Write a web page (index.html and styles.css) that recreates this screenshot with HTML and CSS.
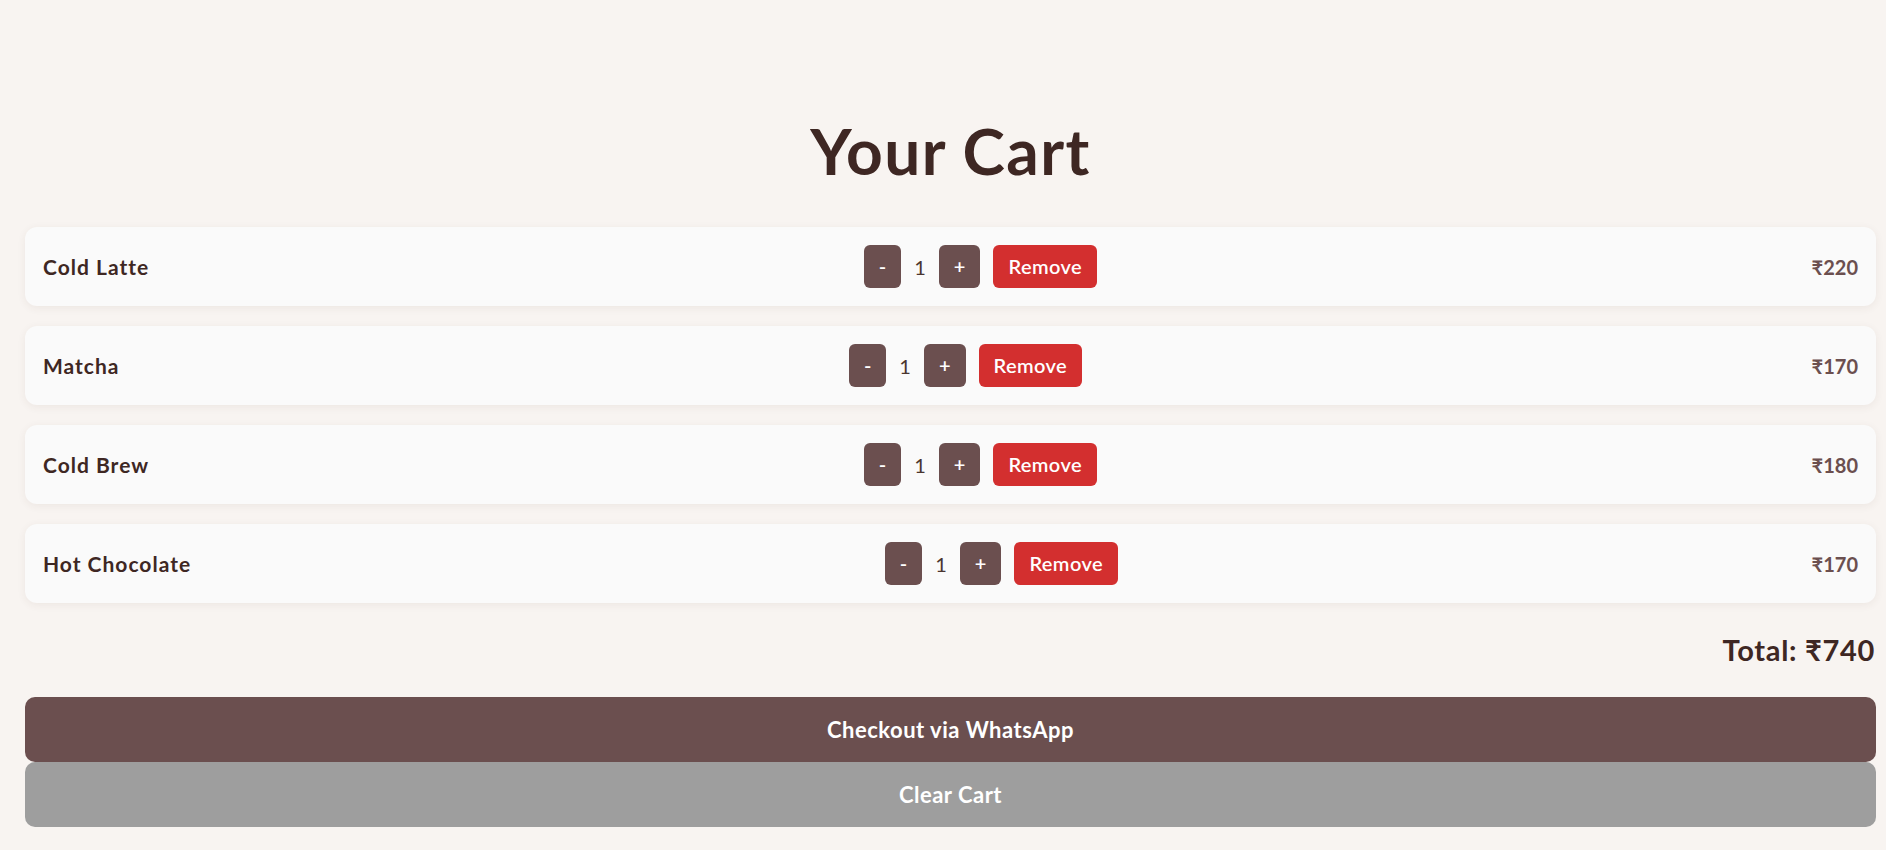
FILE: index.html
```html
<!DOCTYPE html>
<html lang="en">
<head>
<meta charset="utf-8">
<title>Your Cart</title>
<link rel="stylesheet" href="styles.css">
</head>
<body>
<main class="page">
  <h1 class="title">Your Cart</h1>
  <section class="cart-list">
    <div class="cart-item">
      <span class="item-name">Cold Latte</span>
      <div class="controls">
        <button class="qty-btn">-</button>
        <span class="qty">1</span>
        <button class="qty-btn">+</button>
        <button class="remove-btn">Remove</button>
      </div>
      <span class="item-price">₹220</span>
    </div>
    <div class="cart-item">
      <span class="item-name">Matcha</span>
      <div class="controls">
        <button class="qty-btn">-</button>
        <span class="qty">1</span>
        <button class="qty-btn">+</button>
        <button class="remove-btn">Remove</button>
      </div>
      <span class="item-price">₹170</span>
    </div>
    <div class="cart-item">
      <span class="item-name">Cold Brew</span>
      <div class="controls">
        <button class="qty-btn">-</button>
        <span class="qty">1</span>
        <button class="qty-btn">+</button>
        <button class="remove-btn">Remove</button>
      </div>
      <span class="item-price">₹180</span>
    </div>
    <div class="cart-item">
      <span class="item-name">Hot Chocolate</span>
      <div class="controls">
        <button class="qty-btn">-</button>
        <span class="qty">1</span>
        <button class="qty-btn">+</button>
        <button class="remove-btn">Remove</button>
      </div>
      <span class="item-price">₹170</span>
    </div>
  </section>
  <div class="total">Total: ₹740</div>
  <div class="actions">
    <button class="action-btn checkout">Checkout via WhatsApp</button>
    <button class="action-btn clear">Clear Cart</button>
  </div>
</main>
</body>
</html>
```

FILE: styles.css
```css
html, body {
  margin: 0;
  padding: 0;
  background: #f8f4f1;
}

body {
  font-family: Lato, "Noto Sans", "DejaVu Sans", sans-serif;
  color: #3e2723;
}

.page {
  padding: 112px 10px 0 25px;
}

.title {
  margin: 0 0 38px;
  font-size: 64px;
  line-height: 77px;
  font-weight: 700;
  letter-spacing: 1.4px;
  text-align: center;
  color: #3e2723;
}

.cart-list {
  display: flex;
  flex-direction: column;
  gap: 20px;
}

.cart-item {
  display: flex;
  align-items: center;
  justify-content: space-between;
  padding: 18px;
  background: #fafafa;
  border-radius: 12px;
  box-shadow: 0 2px 8px rgba(90, 60, 40, 0.07);
}

.item-name {
  font-size: 21px;
  font-weight: 700;
  letter-spacing: 1px;
  color: #3e2723;
}

.controls {
  display: flex;
  align-items: center;
  gap: 13px;
}

.qty-btn,
.remove-btn {
  font-family: inherit;
  font-size: 20px;
  line-height: 27px;
  font-weight: 600;
  color: #ffffff;
  border: none;
  border-radius: 6px;
  padding: 8px 15px;
}

.qty-btn {
  background: #6b4f4f;
}

.remove-btn {
  background: #d32f2f;
  letter-spacing: 0.4px;
}

.qty {
  font-size: 20px;
  color: #4a3530;
}

.item-price {
  font-size: 20px;
  font-weight: 700;
  color: #6b4f4f;
}

.total {
  margin: 28px 1px 28px 0;
  font-size: 29px;
  line-height: 38px;
  font-weight: 700;
  letter-spacing: 0.7px;
  text-align: right;
  color: #3e2723;
}

.actions {
  display: flex;
  flex-direction: column;
}

.action-btn {
  font-family: inherit;
  height: 65px;
  border: none;
  border-radius: 10px;
  font-size: 22px;
  font-weight: 700;
  letter-spacing: 0.5px;
  color: #ffffff;
}

.checkout {
  background: #6b4f4f;
}

.clear {
  background: #9e9e9e;
}
```
